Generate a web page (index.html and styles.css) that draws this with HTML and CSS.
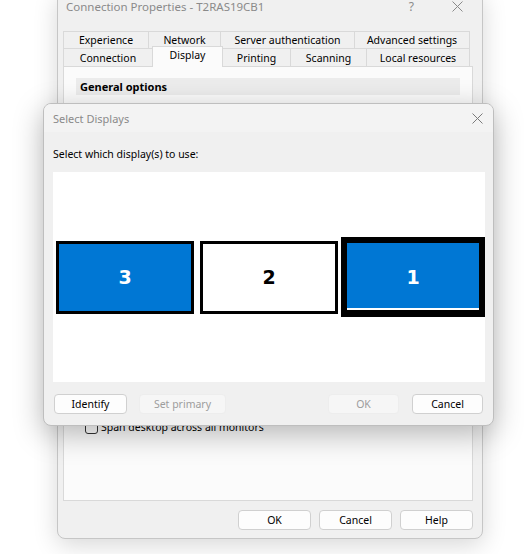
FILE: index.html
```html
<!DOCTYPE html>
<html lang="en">
<head>
  <meta charset="UTF-8" />
  <title>Select Displays</title>
  <link rel="stylesheet" href="styles.css">
</head>
<body>

  <div class="window">
    <div class="titlebar">
      <span class="title">Connection Properties - T2RAS19CB1</span>
      <span class="help">?</span>
      <svg class="close" width="11" height="11" viewBox="0 0 11 11">
        <path d="M0.5 0.5 L10.5 10.5 M10.5 0.5 L0.5 10.5" stroke="#8a8a8a" stroke-width="1" fill="none"/>
      </svg>
    </div>

    <div class="tabs">
      <div class="tab-row">
        <div class="tab t-exp">Experience</div>
        <div class="tab t-net">Network</div>
        <div class="tab t-srv">Server authentication</div>
        <div class="tab t-adv">Advanced settings</div>
      </div>
      <div class="tab-row front">
        <div class="tab t-con">Connection</div>
        <div class="tab t-dis active">Display</div>
        <div class="tab t-prn">Printing</div>
        <div class="tab t-scn">Scanning</div>
        <div class="tab t-loc">Local resources</div>
      </div>
    </div>

    <div class="panel">
      <div class="group-head">General options</div>
      <label class="check"><span class="box"></span>Span desktop across all monitors</label>
    </div>

    <div class="actions">
      <button class="btn">OK</button>
      <button class="btn">Cancel</button>
      <button class="btn">Help</button>
    </div>
  </div>

  <div class="dialog">
    <div class="dlg-title">
      <span>Select Displays</span>
      <svg class="close" width="11" height="11" viewBox="0 0 11 11">
        <path d="M0.5 0.5 L10.5 10.5 M10.5 0.5 L0.5 10.5" stroke="#7a7a7a" stroke-width="1" fill="none"/>
      </svg>
    </div>
    <div class="dlg-body">
      <div class="prompt">Select which display(s) to use:</div>
      <div class="screens">
        <div class="screen blue s-3">3</div>
        <div class="screen white s-2">2</div>
        <div class="screen blue primary s-1">1</div>
      </div>
      <div class="dlg-actions">
        <button class="btn b-identify">Identify</button>
        <button class="btn b-primary" disabled>Set primary</button>
        <button class="btn b-ok" disabled>OK</button>
        <button class="btn b-cancel">Cancel</button>
      </div>
    </div>
  </div>

</body>
</html>
```

FILE: styles.css
```css
* {
  box-sizing: border-box;
}

body {
  margin: 0;
  height: 554px;
  overflow: hidden;
  background: #fff;
  font-family: "Noto Sans", "Liberation Sans", sans-serif;
  font-size: 10.5px;
  color: #000;
}

/* main properties window */
.window {
  width: 426px;
  height: 548px;
  margin: -9px 0 0 57px;
  padding: 0 9px 8px 5px;
  background: #f0f0f0;
  border: 1px solid #c6c6c6;
  border-radius: 8px;
  box-shadow: 0 6px 24px rgba(0,0,0,0.16);
}

.titlebar {
  display: flex;
  align-items: center;
  height: 29px;
  margin-left: 3px;
  color: #8a8a8a;
  font-size: 11.5px;
  line-height: 12px;
}

.titlebar .help {
  margin-left: auto;
  margin-right: 38px;
  font-size: 12px;
  line-height: 12px;
}

.titlebar .close {
  margin-right: 10px;
}

.tabs {
  margin-top: 10px;
  width: 407px;
}

.tab-row {
  display: flex;
  height: 17px;
}

.tab-row.front {
  height: 18px;
}

.tab {
  display: flex;
  align-items: center;
  justify-content: center;
  border: 1px solid #d9d9d9;
  border-bottom: none;
  margin-right: -1px;
  background: #f0f0f0;
  white-space: nowrap;
}

.t-exp { width: 86px; }
.t-net { width: 73px; }
.t-srv { width: 135px; }
.t-adv { width: 116px; }

.t-con { width: 90px; }
.t-dis { width: 71px; }
.t-prn { width: 69px; }
.t-scn { width: 77px; }
.t-loc { width: 104px; }

.tab.active {
  position: relative;
  z-index: 1;
  height: 21px;
  margin-top: -2px;
  padding-bottom: 4px;
  background: #fbfbfb;
}

.panel {
  height: 435px;
  background: #fbfbfb;
  border: 1px solid #d9d9d9;
}

.group-head {
  height: 17px;
  margin: 11px 12px 0;
  padding-left: 4px;
  line-height: 17px;
  background: #ececec;
  font-weight: bold;
  font-size: 11px;
}

.check {
  display: flex;
  align-items: center;
  gap: 3px;
  margin: 325px 0 0 21px;
}

.check .box {
  width: 13px;
  height: 13px;
  border: 1px solid #333;
  border-radius: 3px;
  background: #fff;
}

.actions {
  display: flex;
  justify-content: flex-end;
  gap: 8px;
  margin-top: 9px;
}

.btn {
  height: 20px;
  width: 73px;
  padding: 0;
  font-family: inherit;
  font-size: 10.5px;
  color: #000;
  background: #fdfdfd;
  border: 1px solid #d0d0d0;
  border-radius: 4px;
}

.btn:disabled {
  background: #f6f6f6;
  border-color: #ededed;
  color: #9d9d9d;
}

/* select displays dialog */
.dialog {
  position: absolute;
  left: 43px;
  top: 103px;
  width: 451px;
  height: 323px;
  background: #f0f0f0;
  border: 1px solid #bebebe;
  border-radius: 8px;
  box-shadow: 0 8px 30px rgba(0,0,0,0.28);
  overflow: hidden;
}

.dlg-title {
  display: flex;
  align-items: center;
  justify-content: space-between;
  height: 28px;
  padding: 0 10px 0 9px;
  background: #f3f3f3;
  color: #8a8a8a;
  font-size: 11px;
}

.dlg-body {
  padding: 0 8px 0 9px;
}

.prompt {
  margin-top: 15px;
  line-height: 14px;
}

.screens {
  display: flex;
  align-items: center;
  height: 210px;
  margin-top: 11px;
  background: #fff;
}

.screen {
  display: flex;
  align-items: center;
  justify-content: center;
  width: 138px;
  height: 73px;
  border: 3px solid #000;
  font-family: "DejaVu Sans", sans-serif;
  font-weight: bold;
  font-size: 19px;
}

.screen.blue {
  background: #0077d4;
  color: #fff;
}

.screen.white {
  background: #fff;
  color: #000;
}

.s-3 { margin-left: 3px; }
.s-2 { margin-left: 6px; }

.screen.primary {
  width: 144px;
  height: 80px;
  margin-left: 3px;
  border-width: 6px 6px 7px;
  box-shadow: inset 0 -2px 0 #fff;
}

.dlg-actions {
  display: flex;
  margin-top: 12px;
}

.b-identify { margin-left: 1px; width: 73px; }
.b-primary { margin-left: 12px; width: 87px; }
.b-ok { margin-left: auto; width: 71px; }
.b-cancel { margin-left: 13px; margin-right: 2px; width: 71px; }
```
